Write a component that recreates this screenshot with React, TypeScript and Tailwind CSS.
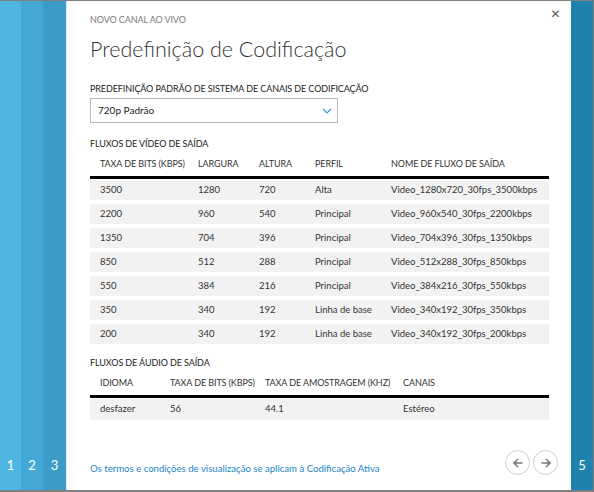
import React from "react";

const font = { fontFamily: 'Lato, "Noto Sans", sans-serif' };

const video = [
  ["3500", "1280", "720", "Alta", "Video_1280x720_30fps_3500kbps"],
  ["2200", "960", "540", "Principal", "Video_960x540_30fps_2200kbps"],
  ["1350", "704", "396", "Principal", "Video_704x396_30fps_1350kbps"],
  ["850", "512", "288", "Principal", "Video_512x288_30fps_850kbps"],
  ["550", "384", "216", "Principal", "Video_384x216_30fps_550kbps"],
  ["350", "340", "192", "Linha de base", "Video_340x192_30fps_350kbps"],
  ["200", "340", "192", "Linha de base", "Video_340x192_30fps_200kbps"],
];

const vw = ["w-[98px] shrink-0", "w-[61px] shrink-0", "w-[56px] shrink-0", "w-[76px] shrink-0", "flex-1"];
const aw = ["w-[70px] shrink-0", "w-[95px] shrink-0", "w-[138px] shrink-0", "flex-1"];

const cap = "text-[9px] tracking-[-0.1px] leading-[14px]";
const cell = "text-[9.5px] text-[#333]";

export default function App() {
  return (
    <div
      className="w-[594px] h-[492px] flex border-t border-b-2 border-r border-[#7f7f7f] bg-white overflow-hidden"
      style={font}
    >
      <div className="w-[21px] bg-[#4db5e1] flex flex-col justify-end items-center pb-[15px] text-white text-[13px]">1</div>
      <div className="w-[22px] bg-[#43a8d5] flex flex-col justify-end items-center pb-[15px] text-white text-[13px]">2</div>
      <div className="w-[23px] bg-[#3b9cc8] flex flex-col justify-end items-center pb-[15px] text-white text-[13px]">3</div>
      <div className="w-[505px] border-l border-[#d6ecf6] relative flex flex-col pl-[23px] pr-[21px] text-[#333] whitespace-nowrap">
        <div className="absolute right-[11px] top-[4px] text-[#555] text-[16px] leading-none">×</div>
        <div className={`mt-[12px] ${cap} text-[#7a7a7a]`}>NOVO CANAL AO VIVO</div>
        <div className="mt-[7px] text-[21.5px] font-light leading-[30px] text-[#333]">Predefinição de Codificação</div>
        <div className={`mt-[18px] ${cap} text-[#222]`}>PREDEFINIÇÃO PADRÃO DE SISTEMA DE CANAIS DE CODIFICAÇÃO</div>
        <div className="mt-[2px] w-[248px] h-[25px] border border-[#b9b9b9] flex items-center justify-between pl-[7px] pr-[5px] text-[10px] text-[#222]">
          <span>720p Padrão</span>
          <svg width="10" height="6" viewBox="0 0 10 6"><path d="M1 1l4 4 4-4" fill="none" stroke="#2e9bd6" strokeWidth="1.2" /></svg>
        </div>
        <div className={`mt-[14px] ${cap} text-[#222]`}>FLUXOS DE VÍDEO DE SAÍDA</div>
        <div className="w-[459px] mt-[3px]">
          <div className={`flex pl-[10px] ${cap} text-[#333] h-[20px] items-center`}>
            {["TAXA DE BITS (KBPS)", "LARGURA", "ALTURA", "PERFIL", "NOME DE FLUXO DE SAÍDA"].map((h, i) => (
              <div key={i} className={vw[i]}>{h}</div>
            ))}
          </div>
          <div className="h-[3px] bg-black mt-[2px]" />
          <div className="flex flex-col gap-[4px] mt-[1px]">
            {video.map((r, ri) => (
              <div key={ri} className={`flex pl-[10px] h-[20px] items-center bg-[#f2f2f2] ${cell}`}>
                {r.map((c, i) => (
                  <div key={i} className={vw[i]}>{c}</div>
                ))}
              </div>
            ))}
          </div>
        </div>
        <div className={`mt-[12px] ${cap} text-[#222]`}>FLUXOS DE ÁUDIO DE SAÍDA</div>
        <div className="w-[459px] mt-[3px]">
          <div className={`flex pl-[10px] ${cap} text-[#333] h-[20px] items-center`}>
            {["IDIOMA", "TAXA DE BITS (KBPS)", "TAXA DE AMOSTRAGEM (KHZ)", "CANAIS"].map((h, i) => (
              <div key={i} className={aw[i]}>{h}</div>
            ))}
          </div>
          <div className="h-[3px] bg-black mt-[2px]" />
          <div className={`flex pl-[10px] h-[21px] items-center bg-[#f2f2f2] mt-[1px] ${cell}`}>
            {["desfazer", "56", "44.1", "Estéreo"].map((c, i) => (
              <div key={i} className={aw[i]}>{c}</div>
            ))}
          </div>
        </div>
        <div className="flex-1 flex items-end justify-between pb-[14px]">
          <div className="text-[9.6px] text-[#1a86c8] leading-[14px]">Os termos e condições de visualização se aplicam à Codificação Ativa</div>
          <div className="flex gap-[3px] mb-[1px] mr-[-8px]">
            <div className="w-[25px] h-[25px] rounded-full border-[1.5px] border-[#cfcfcf] flex items-center justify-center">
              <svg width="12" height="12" viewBox="0 0 12 12"><path d="M10.5 6H2M6 2L2 6l4 4" fill="none" stroke="#777" strokeWidth="1.6" /></svg>
            </div>
            <div className="w-[25px] h-[25px] rounded-full border-[1.5px] border-[#cfcfcf] flex items-center justify-center">
              <svg width="12" height="12" viewBox="0 0 12 12"><path d="M1.5 6H10M6 2l4 4-4 4" fill="none" stroke="#777" strokeWidth="1.6" /></svg>
            </div>
          </div>
        </div>
      </div>
      <div className="flex-1 bg-[#1f81ad] flex flex-col justify-end items-center pb-[15px] text-white text-[13px]">5</div>
    </div>
  );
}
